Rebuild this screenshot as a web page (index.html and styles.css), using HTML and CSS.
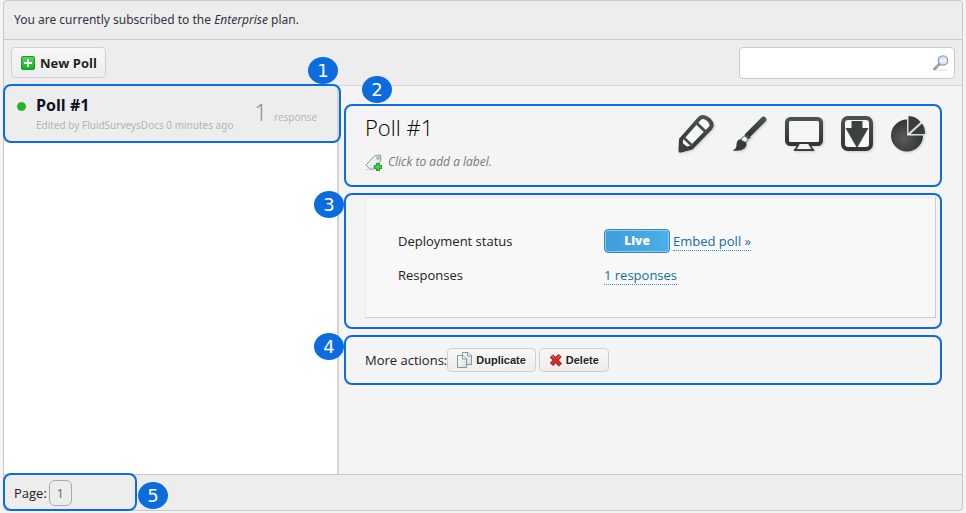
FILE: index.html
```html
<!DOCTYPE html>
<html lang="en">
<head>
<meta charset="utf-8">
<meta name="viewport" content="width=device-width, initial-scale=1">
<title>Polls</title>
<link rel="stylesheet" href="styles.css">
</head>
<body>
<svg width="0" height="0" class="defs" aria-hidden="true">
  <defs>
    <linearGradient id="ink" x1="0" y1="0" x2="0" y2="1"><stop offset="0" stop-color="#4a5254"/><stop offset="1" stop-color="#303536"/></linearGradient>
    <linearGradient id="green" x1="0" y1="0" x2="0" y2="1"><stop offset="0" stop-color="#5fd35f"/><stop offset="1" stop-color="#0bb51c"/></linearGradient>
    <radialGradient id="pie" cx="0.4" cy="0.6" r="0.6"><stop offset="0" stop-color="#5a5a5a"/><stop offset="1" stop-color="#303434"/></radialGradient>
    <linearGradient id="paper" x1="0" y1="0" x2="1" y2="1"><stop offset="0" stop-color="#ffffff"/><stop offset="1" stop-color="#cfe0e0"/></linearGradient>
  </defs>
</svg>
<div class="panel">
  <p class="notice">You are currently subscribed to the <em>Enterprise</em> plan.</p>
  <header class="toolbar">
    <button class="btn btn-new" type="button">
      <svg width="14" height="14" viewBox="0 0 14 14" aria-hidden="true"><rect x="0.5" y="0.5" width="13" height="13" rx="1.5" fill="url(#green)" stroke="#159a26"/><path d="M7 3v8M3 7h8" stroke="#fff" stroke-width="2"/></svg>
      New Poll
    </button>
    <div class="search">
      <input type="search" aria-label="Search polls">
      <svg width="16" height="16" viewBox="0 0 16 16" aria-hidden="true"><path d="M2 15h12" stroke="#ddd"/><path d="M6.5 9 1.500 14" stroke="#888" stroke-width="2.500" stroke-linecap="round"/><path d="M6 9.500 2 13.500" stroke="#ddd" stroke-width="1"/><circle cx="10" cy="5.500" r="4.700" fill="#d9ebfb" stroke="#9c9ca4" stroke-width="1.300"/><path d="M7 6.500q3-2 6-1" stroke="#fff" fill="none"/></svg>
    </div>
  </header>
  <div class="content">
    <aside class="sidebar">
      <a class="poll marked" href="#poll">
        <span class="dot"></span>
        <span class="poll-text">
          <strong>Poll #1</strong>
          <small>Edited by FluidSurveysDocs 0 minutes ago</small>
        </span>
        <span class="count"><b>1</b> response</span>
        <span class="badge badge-above-right">1</span>
      </a>
    </aside>
    <main class="detail" id="poll">
      <section class="callout summary">
        <div>
          <h1>Poll #1</h1>
          <a class="add-label" href="#label">
            <svg width="18" height="17" viewBox="0 0 18 17" aria-hidden="true"><path d="M1 15.500h9" stroke="#ccc"/><path d="M1 11 10 1.500 15.500 1 16 6.500 7 15.500Q5 16 1 11Z" fill="url(#paper)" stroke="#869898"/><circle cx="13" cy="4" r="1.300" fill="#fff" stroke="#869898"/><path d="M13 9v8M9 13h8" stroke="#2c9a3c" stroke-width="4"/><path d="M13 10v6M10 13h6" stroke="#46d046" stroke-width="2"/></svg>
            <em>Click to add a label.</em>
          </a>
        </div>
        <nav class="tools" aria-label="Poll tools">
          <a href="#edit" aria-label="Edit"><svg width="40" height="42" viewBox="0 0 40 42"><path d="M4.500 37.500 5 26.500 23.500 5.500Q27 2 32.500 6.500 37.500 11 34.500 15L15.500 34.500Z" fill="#f7f7f7" stroke="url(#ink)" stroke-width="4" stroke-linejoin="round"/><path d="M20.500 10 30.500 19.500" stroke="#444c4e" stroke-width="3"/><path d="m7.500 24.500 9.500 9" stroke="#444c4e" stroke-width="2.500"/><path d="M4.500 37.500 5.500 31l6 5Z" fill="#384042" stroke="#384042" stroke-width="3"/></svg></a>
          <a href="#style" aria-label="Style"><svg width="36" height="36" viewBox="0 0 36 36"><path d="m15.500 19.500 16-16" stroke="url(#ink)" stroke-width="5.500" stroke-linecap="round"/><path d="m15 18 4 4-5 2-2-2Z" fill="#444c4e"/><circle cx="12.500" cy="23.500" r="3" fill="#f2f2f2" stroke="#687071"/><path d="M8.500 23q-4 1-4 6 0 4-4 5.500 8 1 12-2 3-3 1.500-6.500-3 0-5.500-3Z" fill="#343b3c"/></svg></a>
          <a href="#preview" aria-label="Preview"><svg width="40" height="36" viewBox="0 0 40 36"><rect x="3" y="3" width="34" height="25" rx="3.500" fill="#f5f5f5" stroke="url(#ink)" stroke-width="4"/><path d="m15 28-4 6h18l-4-6" fill="#f3f3f3" stroke="#394142" stroke-width="1.800"/><path d="M10 34h20" stroke="#394142" stroke-width="2"/></svg></a>
          <a href="#download" aria-label="Download"><svg width="34" height="38" viewBox="0 0 34 38"><rect x="3" y="3" width="28" height="31" rx="5" fill="#f7f7f7" stroke="url(#ink)" stroke-width="4"/><path d="M11.500 6h11v7h6L17 33 5.500 13h6Z" fill="#3c4142"/></svg></a>
          <a href="#report" aria-label="Report"><svg width="36" height="38" viewBox="0 0 36 38"><path d="M17 4.500V20.500H33A16 16 0 1 1 17 4.500Z" fill="url(#pie)"/><path d="M18.500 1Q26 1 30.500 7L18.500 18ZM32 8.500Q35 12 35 19H20.500Z" fill="#383d3e"/></svg></a>
        </nav>
        <span class="badge badge-above-left">2</span>
      </section>
      <section class="callout status">
        <dl class="card">
          <div><dt>Deployment status</dt><dd><button class="live" type="button">Live</button><a class="link" href="#embed">Embed poll »</a></dd></div>
          <div><dt>Responses</dt><dd><a class="link" href="#responses">1 responses</a></dd></div>
        </dl>
        <span class="badge badge-left">3</span>
      </section>
      <section class="callout actions">
        <span>More actions:</span>
        <button class="btn btn-small" type="button">
          <svg width="16" height="16" viewBox="0 0 16 16" aria-hidden="true"><path d="M5.500.500H11l3.500 3v9h-9Z" fill="url(#paper)" stroke="#839999"/><path d="M10.500.500v3.500h4" fill="#fff" stroke="#839999"/><path d="M.500 3.500H6l3.500 3v9h-9Z" fill="url(#paper)" stroke="#839999"/><path d="M5.500 3.500v3.500h4" fill="#fff" stroke="#839999"/></svg>
          Duplicate
        </button>
        <button class="btn btn-small" type="button">
          <svg width="14" height="14" viewBox="0 0 14 14" aria-hidden="true"><path d="m2.500 3 9 9M11 2.500l-8.500 9" stroke="#9f1717" stroke-width="4.500"/><path d="m2.500 3 9 9M11 2.500l-8.500 9" stroke="#d62c2c" stroke-width="2.800"/><path d="m2.500 2.500 3 3M11 2.500l-3 3" stroke="#ef7777"/></svg>
          Delete
        </button>
        <span class="badge badge-left">4</span>
      </section>
    </main>
  </div>
  <footer class="footer">
    <nav class="pager marked" aria-label="Pages">Page: <a href="#page-1">1</a><span class="badge badge-right">5</span></nav>
  </footer>
</div>
</body>
</html>
```
FILE: styles.css
```css
* {
  box-sizing: border-box;
}

body {
  margin: 0;
  min-height: 100vh;
  padding: 0 3px 2px;
  display: flex;
  background: #f4f4f4;
  color: #222;
  font: 13px/18px "Open Sans", "Noto Sans", sans-serif;
}

.defs {
  position: absolute;
}

.panel {
  flex: 1;
  display: flex;
  flex-direction: column;
  border: 1px solid #c8c8c8;
  border-radius: 4px;
  background: #ededed;
}

.notice {
  margin: 0;
  padding: 10px;
  border-bottom: 1px solid #c8c8c8;
  color: #334;
  font: 12px/18px "Noto Sans", sans-serif;
}

.toolbar {
  display: flex;
  justify-content: space-between;
  padding: 7px 7px 6px;
  border-bottom: 1px solid #d8d8d8;
}

.btn {
  display: flex;
  align-items: center;
  border: 1px solid #d0d0d0;
  border-radius: 4px;
  background: linear-gradient(#f7f7f7, #ededed);
  color: #222;
  font-family: "Open Sans", sans-serif;
  font-weight: 700;
  text-shadow: 1px 1px #fff;
}

.btn-new {
  height: 31px;
  gap: 5px;
  padding: 0 8px 0 9px;
  font-size: 13px;
}

.btn-small {
  height: 24px;
  gap: 3px;
  padding: 0 9px;
  font-family: "Liberation Sans", sans-serif;
  font-size: 11px;
}

.search {
  position: relative;
  width: 216px;
}

.search input {
  display: block;
  width: 100%;
  height: 32px;
  padding: 0 30px 0 8px;
  border: 1px solid #c8c8c8;
  border-radius: 4px;
  background: #fff;
  font: inherit;
}

.search svg {
  position: absolute;
  top: 8px;
  right: 6px;
}

.content {
  flex: 1;
  display: flex;
  background: #f4f4f4;
}

.sidebar {
  flex: none;
  width: 335px;
  border-right: 2px solid #d4d4d4;
  background: #fff;
}

.marked {
  position: relative;
}

.marked::after {
  content: "";
  position: absolute;
  inset: -2px -4px -1px -1px;
  border: 2px solid #0c6cdd;
  border-radius: 8px;
}

.poll {
  display: flex;
  align-items: center;
  height: 56px;
  padding: 0 20px 0 13px;
  background: #ededed;
  color: #112;
  text-decoration: none;
}

.dot {
  width: 9px;
  height: 9px;
  margin: 0 10px 16px 0;
  border: 1px solid #3aa53a;
  border-radius: 50%;
  background: #17bd27;
}

.poll-text {
  flex: 1;
  display: flex;
  flex-direction: column;
}

.poll-text strong {
  font-size: 16px;
  line-height: 22px;
}

.poll-text small {
  color: #b4b4b4;
  font-family: "Noto Sans", sans-serif;
  font-size: 10px;
  line-height: 18px;
}

.count {
  color: #b4b4b4;
  font-size: 10px;
}

.count b {
  margin-right: 4px;
  color: #888;
  font-size: 23px;
  font-weight: 300;
}

.detail {
  flex: 1;
  display: flex;
  flex-direction: column;
  gap: 6px;
  padding: 18px 20px 18px 5px;
}

.callout {
  position: relative;
  border: 2px solid #0c6cdd;
  border-radius: 8px;
}

.summary {
  display: flex;
  justify-content: space-between;
  min-height: 83px;
  padding: 7px 14px 7px 19px;
}

h1 {
  margin: 0 0 12px;
  color: #000;
  font-size: 22px;
  font-weight: 300;
  line-height: 28px;
}

.add-label {
  display: flex;
  align-items: center;
  gap: 5px;
  color: #777;
  font-size: 12px;
  text-decoration: none;
}

.tools {
  display: flex;
  align-items: center;
  gap: 16px;
  height: 42px;
}

.tools a {
  display: flex;
  filter: drop-shadow(1px 1px 1px #ccc);
}

svg {
  flex: none;
  fill: none;
}

.status {
  padding: 2px 4px 9px 19px;
}

.card {
  margin: 0;
  padding: 26px 32px 25px;
  border: 1px solid #ccc;
  border-top-color: #ebebeb;
  border-left-color: #ebebeb;
  background: #f8f8f8;
}

.card div {
  display: flex;
  align-items: center;
  height: 34px;
}

dt {
  width: 206px;
}

dd {
  display: flex;
  align-items: center;
  gap: 3px;
  margin: 0;
}

.live {
  width: 66px;
  height: 24px;
  border: 1px solid #3787c5;
  border-radius: 4px;
  box-shadow: inset 0 0 0 1px #8ccbef;
  background: linear-gradient(90deg, #429cda, #49b0e6);
  color: #fff;
  font: 800 12px/18px "Open Sans", sans-serif;
}

.link {
  border-bottom: 1px dotted #2e94d0;
  color: #146bab;
  text-decoration: none;
}

.actions {
  display: flex;
  align-items: center;
  gap: 3px;
  height: 50px;
  padding-left: 19px;
}

.actions > span:first-child {
  margin-right: -3px;
}

.footer {
  border-top: 1px solid #c8c8c8;
}

.pager {
  display: flex;
  align-items: center;
  gap: 2px;
  width: 129px;
  height: 35px;
  padding-left: 10px;
}

.pager a {
  width: 23px;
  border: 1px solid #aaa;
  border-radius: 6px;
  color: #666;
  line-height: 24px;
  text-align: center;
  text-decoration: none;
}

.badge {
  position: absolute;
  z-index: 1;
  width: 30px;
  height: 27px;
  border-radius: 50%;
  background: #0c6cdd;
  color: #fff;
  font: 18px/27px "DejaVu Sans", sans-serif;
  text-align: center;
}

.badge-above-right {
  top: -29px;
  right: -1px;
}

.badge-above-left {
  top: -30px;
  left: 16px;
}

.badge-left {
  top: -4px;
  left: -32px;
}

.badge-right {
  top: 7px;
  left: 134px;
}
```
